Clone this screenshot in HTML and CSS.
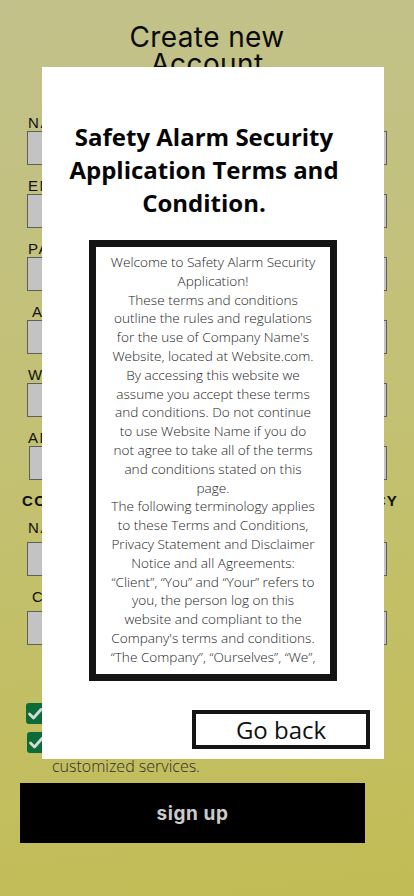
FILE: index.html
```html
<!DOCTYPE html>
<html lang="en">
<head>
<meta charset="utf-8">
<title>Create new Account</title>
<link rel="stylesheet" href="styles.css">
</head>
<body>
<div class="page">
  <h1 class="title">Create new<br>Account</h1>
  <form class="form">
    <div class="field"><span class="lbl">NAME</span><span class="input"></span></div>
    <div class="field"><span class="lbl">EMAIL</span><span class="input"></span></div>
    <div class="field"><span class="lbl">PASSWORD</span><span class="input"></span></div>
    <div class="field"><span class="lbl lbl--in">AGE</span><span class="input"></span></div>
    <div class="field"><span class="lbl">WEIGHT</span><span class="input"></span></div>
    <div class="field"><span class="lbl">ADDRESS</span><span class="input input--in"></span></div>
    <div class="section">CONTACT PERSON IN CASE OF EMERGENCY</div>
    <div class="field field--b"><span class="lbl">NAME</span><span class="input"></span></div>
    <div class="field field--b"><span class="lbl lbl--in">CONTACT NUMBER</span><span class="input"></span></div>
    <div class="checks">
      <div class="check">
        <svg class="box" width="18" height="21" viewBox="0 0 18 21"><rect x="0" y="0" width="18" height="21" rx="3" fill="#0b6c37"/><path d="M3.5 11 L7.5 15 L15 6.5" fill="none" stroke="#d9d9d9" stroke-width="2.8" stroke-linecap="round" stroke-linejoin="round"/></svg>
        <span class="check-text">I agree to the Terms and Conditions</span>
      </div>
      <div class="check">
        <svg class="box" width="18" height="21" viewBox="0 0 18 21"><rect x="0" y="0" width="18" height="21" rx="3" fill="#0b6c37"/><path d="M3.5 11 L7.5 15 L15 6.5" fill="none" stroke="#d9d9d9" stroke-width="2.8" stroke-linecap="round" stroke-linejoin="round"/></svg>
        <span class="check-text">I want to receive news, offers and<br>customized services.</span>
      </div>
    </div>
    <button type="button" class="signup">sign up</button>
  </form>
</div>

<div class="modal">
  <h2 class="modal-title">Safety Alarm Security Application Terms and Condition.</h2>
  <div class="terms">
    <div class="terms-scroll">
      <p>Welcome to Safety Alarm Security<br>Application!</p>
      <p>These terms and conditions<br>outline the rules and regulations<br>for the use of Company Name's<br>Website, located at Website.com.</p>
      <p>By accessing this website we<br>assume you accept these terms<br>and conditions. Do not continue<br>to use Website Name if you do<br>not agree to take all of the terms<br>and conditions stated on this<br>page.</p>
      <p>The following terminology applies<br>to these Terms and Conditions,<br>Privacy Statement and Disclaimer<br>Notice and all Agreements:<br>“Client”, “You” and “Your” refers to<br>you, the person log on this<br>website and compliant to the<br>Company's terms and conditions.<br>“The Company”, “Ourselves”, “We”,<br>“Our” and “Us”, refers to our<br>Company.</p>
    </div>
  </div>
  <button type="button" class="goback">Go back</button>
</div>
</body>
</html>
```
FILE: styles.css
```css
html, body {
  margin: 0;
  padding: 0;
}

body {
  width: 414px;
  height: 896px;
  overflow: hidden;
  position: relative;
  background: linear-gradient(172deg, #c2c18b 0%, #c3c172 50%, #c2bc55 100%);
  font-family: "Open Sans", "Liberation Sans", sans-serif;
  color: #111;
}

.page {
  padding-top: 24px;
}

.title {
  margin: 0;
  text-align: center;
  font-family: Inter, "Liberation Sans", sans-serif;
  font-weight: 400;
  font-size: 28px;
  line-height: 27px;
  letter-spacing: 0.4px;
  color: #0a0a0a;
}

.form {
  display: flex;
  flex-direction: column;
  margin-top: 36px;
}

.field {
  display: flex;
  flex-direction: column;
  margin: 0 27px 12px;
}

.lbl {
  font-family: "Liberation Sans", Arial, sans-serif;
  font-size: 15px;
  line-height: 17px;
  letter-spacing: 1.6px;
  padding-left: 1px;
  color: #111;
}

.lbl--in {
  padding-left: 5px;
}

.input {
  display: block;
  height: 34px;
  box-sizing: border-box;
  background: #c3c3c3;
  border: 1px solid #5e5e5e;
}

.input--in {
  margin-left: 2px;
}

.field--b .input {
  margin-top: 6px;
}

.section {
  margin: 0 0 10px 22px;
  font-family: "Liberation Sans", Arial, sans-serif;
  font-weight: 700;
  font-size: 15px;
  line-height: 17px;
  letter-spacing: 1.3px;
  color: #111;
  white-space: nowrap;
}

.checks {
  display: flex;
  flex-direction: column;
  gap: 6px;
  margin: 46px 0 0 26px;
}

.check {
  display: flex;
  align-items: flex-start;
  gap: 7px;
}

.box {
  flex: none;
  display: block;
}

.check + .check .box {
  margin-left: 1px;
}

.check-text {
  font-family: "Open Sans", sans-serif;
  font-weight: 300;
  font-size: 16px;
  line-height: 23px;
  color: #2f2f2a;
}

.signup {
  margin: 5px 0 0 20px;
  width: 345px;
  height: 60px;
  background: #000;
  border: none;
  color: #cbcbcb;
  font-family: Inter, "Liberation Sans", sans-serif;
  font-weight: 700;
  font-size: 19px;
  letter-spacing: 0.6px;
  padding: 0;
}

.modal {
  position: absolute;
  top: 67px;
  left: 42px;
  width: 342px;
  height: 692px;
  box-sizing: border-box;
  background: #fff;
  display: flex;
  flex-direction: column;
  padding-top: 53px;
}

.modal-title {
  margin: 0;
  padding-right: 18px;
  text-align: center;
  font-family: "Open Sans", sans-serif;
  font-weight: 700;
  font-size: 24px;
  line-height: 33px;
  color: #050505;
}

.terms {
  margin: 21px auto 0;
  width: 248px;
  height: 441px;
  flex: none;
  box-sizing: border-box;
  border: 7px solid #141414;
  padding: 6px 2px;
  text-align: center;
  white-space: nowrap;
  font-family: "Open Sans", sans-serif;
  font-weight: 300;
  font-size: 13.6px;
  line-height: 18.8px;
  color: #1e1e1e;
}

.terms-scroll {
  height: 414px;
  overflow: hidden;
}

.terms p {
  margin: 0;
}

.goback {
  align-self: flex-end;
  margin: 29px 14px 0 0;
  width: 178px;
  height: 39px;
  box-sizing: border-box;
  background: #fff;
  border: 4px solid #141414;
  padding: 0;
  font-family: "Open Sans", sans-serif;
  font-weight: 400;
  font-size: 24px;
  line-height: 1;
  color: #111;
}
```
